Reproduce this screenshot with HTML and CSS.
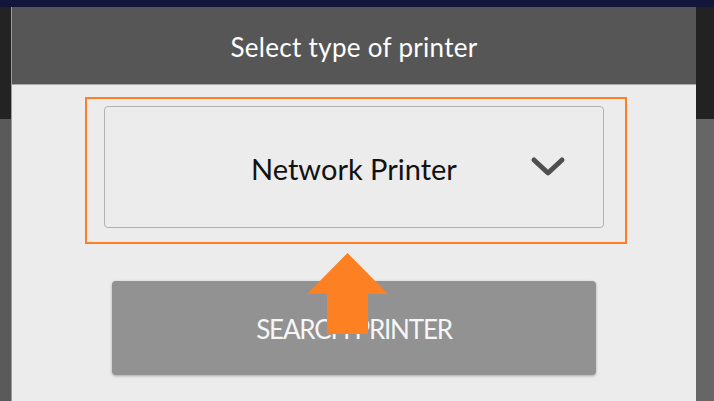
FILE: index.html
```html
<!DOCTYPE html>
<html>
<head>
<meta charset="utf-8">
<link rel="stylesheet" href="styles.css">
</head>
<body>
<div class="screen">
  <div class="topbar"></div>
  <div class="stage">
    <div class="gutter gutter-left"></div>
    <div class="dialog">
      <div class="dialog-header">Select type of printer</div>
      <div class="dialog-body">
        <div class="highlight">
          <div class="select">
            <span class="select-text">Network Printer</span>
            <svg class="chevron" width="40" height="26" viewBox="0 0 40 26">
              <polyline points="4,5 18,18 32,5" fill="none" stroke="#4f4f4f" stroke-width="5" stroke-linecap="round" stroke-linejoin="round"/>
            </svg>
          </div>
        </div>
        <div class="button">SEARCH PRINTER</div>
        <svg class="arrow" width="82" height="82" viewBox="0 0 82 82">
          <polygon points="40.5,0 81,41 61,41 61,81 20,81 20,41 0,41" fill="#fd8023"/>
        </svg>
      </div>
    </div>
    <div class="gutter gutter-right"></div>
  </div>
</div>
</body>
</html>
```

FILE: styles.css
```css
html, body {
  margin: 0;
  padding: 0;
}
body {
  width: 714px;
  height: 401px;
  overflow: hidden;
  background: #5c5c5c;
  font-family: "Lato", "Liberation Sans", sans-serif;
}
.screen {
  display: flex;
  flex-direction: column;
  height: 401px;
}
.topbar {
  height: 7px;
  background: #12163a;
  flex: none;
}
.stage {
  flex: 1;
  display: flex;
}
.gutter {
  flex: none;
}
.gutter-left {
  width: 11px;
  background: linear-gradient(to bottom, #232323 0, #232323 112px, #5a5a5a 112px);
  border-right: 1px solid #9a9a9a;
}
.gutter-right {
  width: 18px;
  background: linear-gradient(to bottom, #222222 0, #222222 112px, #666666 112px);
}
.dialog {
  width: 684px;
  display: flex;
  flex-direction: column;
  background: #ececec;
}
.dialog-header {
  height: 78px;
  box-sizing: border-box;
  background: #565656;
  border-bottom: 1px solid #a8a8a8;
  color: #ffffff;
  font-size: 26px;
  letter-spacing: 0.3px;
  display: flex;
  align-items: center;
  justify-content: center;
  padding-top: 3px;
}
.dialog-body {
  position: relative;
  flex: 1;
  padding-top: 12px;
}
.highlight {
  width: 542px;
  height: 147px;
  box-sizing: border-box;
  margin-left: 73px;
  border: 2px solid #fd7f25;
  padding: 7px 0 0 17px;
}
.select {
  width: 500px;
  height: 122px;
  box-sizing: border-box;
  border: 1px solid #b2b2b2;
  border-radius: 4px;
  position: relative;
  display: flex;
  align-items: center;
  justify-content: center;
}
.select-text {
  font-size: 29px;
  color: #111111;
  margin-top: 2px;
}
.chevron {
  position: absolute;
  left: 425px;
  top: 48px;
}
.button {
  width: 484px;
  height: 94px;
  margin: 37px 0 0 100px;
  background: #929292;
  border-radius: 4px;
  box-shadow: 0 1px 3px rgba(0, 0, 0, 0.3);
  color: #f6f6f6;
  font-size: 26px;
  letter-spacing: -1.2px;
  display: flex;
  align-items: center;
  justify-content: center;
  padding-top: 2px;
  box-sizing: border-box;
}
.arrow {
  position: absolute;
  left: 295px;
  top: 168px;
}
```
